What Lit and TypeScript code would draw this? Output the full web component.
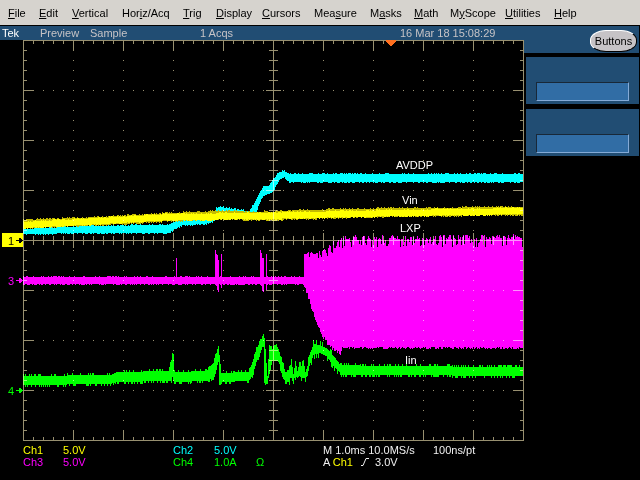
import { LitElement, html, svg, css } from "lit";
import { customElement } from "lit/decorators.js";

type Key = [x: number, top: number, bottom: number];

const W = 524;
const H = 402;

const menus: [string, string, string, number][] = [
  ["", "F", "ile", 31], ["", "E", "dit", 33], ["", "V", "ertical", 50], ["Hor", "i", "z/Acq", 61],
  ["", "T", "rig", 33], ["", "D", "isplay", 46], ["", "C", "ursors", 52], ["Mea", "s", "ure", 56],
  ["M", "a", "sks", 44], ["", "M", "ath", 36], ["M", "y", "Scope", 55], ["", "U", "tilities", 49],
  ["", "H", "elp", 30],
];

/* Repeatable noise, so a trace looks the same on every draw. */
function noise(seed: number) {
  let s = seed;
  return () => {
    s = (s * 1664525 + 1013904223) >>> 0;
    return s / 4294967296;
  };
}

/* Envelope between the keys, one vertical bar for each sample column. */
function envelope(keys: Key[], seed: number, jitter = 2): string {
  const rnd = noise(seed);
  let d = "";
  for (let i = 0; i < keys.length - 1; i++) {
    const [x0, t0, b0] = keys[i];
    const [x1, t1, b1] = keys[i + 1];
    for (let x = x0; x < x1; x++) {
      const f = (x - x0) / (x1 - x0);
      const top = Math.round(t0 + (t1 - t0) * f) - (rnd() < 0.3 ? jitter : 0);
      const bottom = Math.round(b0 + (b1 - b0) * f) + (rnd() < 0.4 ? jitter : 0);
      d += `M${x} ${top}h1V${bottom}h-1z`;
    }
  }
  return d;
}

/* Bars from a list of x, top, bottom. */
const bars = (list: Key[]) => list.map(([x, t, b]) => `M${x} ${t}h1V${b}h-1z`).join("");

const ch2 = envelope([
  [23, 189, 194], [90, 186, 193], [168, 185, 193], [173, 182, 190], [182, 180, 185], [205, 179, 184],
  [212, 175, 182], [216, 168, 178], [221, 167, 177], [238, 170, 178], [249, 171, 177], [254, 163, 176],
  [258, 155, 166], [263, 146, 155], [268, 146, 154], [274, 138, 149], [279, 132, 140], [284, 131, 137],
  [289, 134, 142], [523, 134, 142]], 7, 1);
const ch1 = envelope([
  [23, 180, 188], [100, 177, 185], [170, 173, 181], [220, 171, 179], [263, 172, 180],
  [264, 170, 179], [267, 172, 180], [300, 170, 179], [400, 168, 176], [523, 167, 175]], 23, 1);
const ch1Core = envelope([
  [23, 182, 188], [100, 178, 184], [170, 174, 180], [263, 173, 179], [300, 172, 178],
  [400, 170, 176], [523, 168, 174]], 45, 1);
const ch3 = envelope([[23, 237, 244], [304, 237, 244]], 11, 1) + bars([
  [176, 218, 240], [215, 210, 243], [216, 214, 246], [217, 215, 250], [218, 220, 252], [221, 214, 248],
  [260, 210, 243], [261, 213, 246], [262, 218, 251], [263, 218, 252], [266, 214, 250]]);

/* Switching burst: ragged outline over a solid body. */
function burst(): string {
  const keys: Key[] = [
    [304, 209, 245], [307, 215, 253], [314, 216, 274], [318, 215, 286], [324, 213, 297],
    [332, 208, 307], [340, 203, 312], [342, 202, 307], [400, 202, 307], [523, 201, 307]];
  const rnd = noise(91);
  let d = "";
  for (let i = 0; i < keys.length - 1; i++) {
    const [x0, t0, b0] = keys[i];
    const [x1, t1, b1] = keys[i + 1];
    for (let x = x0; x < x1; x++) {
      const f = (x - x0) / (x1 - x0);
      const spread = x < 307 ? 1 : x < 326 ? 4 : 7;
      const r = rnd();
      const top = t0 + (t1 - t0) * f + (r < 0.3 ? r * 20 : -r * spread);
      const bottom = b0 + (b1 - b0) * f + rnd() * (x < 342 ? 4 : 2);
      d += `M${x} ${Math.round(top)}h1V${Math.round(bottom)}h-1z`;
    }
  }
  return d;
}
const ch3Burst = burst();

const ch4 = envelope([
  [23, 336, 345], [110, 335, 344], [116, 332, 342], [168, 331, 341], [171, 320, 341], [172, 313, 337],
  [173, 314, 341], [174, 332, 342], [206, 331, 341], [213, 323, 338], [218, 306, 322], [219, 315, 343],
  [221, 333, 342], [248, 332, 341], [252, 322, 336], [256, 309, 322], [260, 301, 313], [262, 296, 307],
  [263, 294, 307], [264, 298, 343], [267, 336, 342], [269, 305, 334], [272, 309, 321], [276, 304, 321],
  [278, 309, 320], [282, 322, 337], [285, 332, 342], [289, 332, 342]], 61)
  + envelope([
  [289, 330, 341], [291, 319, 334], [293, 334, 340], [295, 321, 336],
  [297, 331, 338], [299, 322, 336], [301, 330, 337], [303, 320, 338], [305, 332, 338], [307, 326, 336],
  [309, 315, 326], [313, 304, 315], [320, 305, 313], [326, 308, 316], [334, 317, 327], [340, 325, 333]], 77, 4)
  + envelope([[340, 325, 335], [380, 326, 335], [523, 327, 336]], 15);

function graticule(): string {
  let d = "M23 0h501v1h-501zM23 400h501v1h-501zM23 0h1v401h-1zM523 0h1v401h-1zM23 200h501v1h-501zM273 0h1v401h-1z";
  for (let x = 33; x < 523; x += 10) {
    const major = (x - 23) % 50 === 0;
    const n = major ? 10 : 4;
    d += `M${x} 0h1v${n}h-1zM${x} ${401 - n}h1v${n}h-1z`;
    const c = major ? 7 : 4;
    d += `M${x} ${200 - c}h1v${c * 2 + 1}h-1z`;
    for (let y = 50; y < 400; y += 50) if (y !== 200) d += `M${x} ${y}h1v1h-1z`;
  }
  for (let y = 10; y < 400; y += 10) {
    const major = y % 50 === 0;
    const n = major ? 10 : 4;
    d += `M23 ${y}h${n}v1h-${n}zM${524 - n} ${y}h${n}v1h-${n}z`;
    const c = major ? 7 : 4;
    d += `M${273 - c} ${y}h${c * 2 + 1}v1h-${c * 2 + 1}z`;
    for (let x = 73; x < 523; x += 50) if (x !== 273) d += `M${x} ${y}h1v1h-1z`;
  }
  return d;
}
const grid = graticule();

@customElement("scope-plot")
export class ScopePlot extends LitElement {
  static styles = css`
    :host { display: block; }
    svg { display: block; width: 100%; height: auto; shape-rendering: crispEdges; }
    .ch1 { fill: #ffff00; }
    .ch1-edge { fill: #c4bc00; }
    .ch2 { fill: #00ffff; }
    .ch3 { fill: #ff00ff; }
    .ch4 { fill: #00ff00; }
    .grid { fill: #989070; mix-blend-mode: screen; }
    .trigger { fill: #ff7020; }
    .on-ch1 { fill: #000; }
    text { font: 11px "Liberation Sans", Arial, sans-serif; }
    .label { fill: #fff; }
  `;

  render() {
    const arrow = (y: number, cls: string) =>
      svg`<path class=${cls} d="M16 ${y}h3v-2h2v1h1v1h1v1h-1v1h-1v1h-2v-2h-3z"/>`;
    return html`<svg viewBox="0 0 ${W} ${H}" role="img" aria-label="Waveforms">
      <path class="ch2" d=${ch2} />
      <path class="ch1-edge" d=${ch1} />
      <path class="ch1" d=${ch1Core} />
      <path class="ch3" d=${ch3} />
      <path class="ch3" d=${ch3Burst} />
      <path class="ch4" d=${ch4} />
      <path class="grid" d=${grid} />
      <path class="trigger" d="M386 0h10v2h-1v1h-1v1h-1v1h-1v1h-2v-1h-1v-1h-1v-1h-1v-1h-1z" />
      <rect class="ch1" x="2" y="193" width="21" height="14" />
      ${arrow(200, "on-ch1")} ${arrow(240, "ch3")} ${arrow(350, "ch4")}
      <text class="on-ch1" x="8" y="205">1</text>
      <text class="ch3" x="8" y="245">3</text>
      <text class="ch4" x="8" y="355">4</text>
      <text class="label" x="396" y="129">AVDDP</text>
      <text class="label" x="402" y="164">Vin</text>
      <text class="label" x="400" y="192">LXP</text>
      <text class="label" x="405" y="324">Iin</text>
    </svg>`;
  }
}

@customElement("app-root")
export class AppRoot extends LitElement {
  static styles = css`
    :host {
      display: block;
      min-height: 100vh;
      background: #000;
      color: #f0f0f0;
      font: 11px/12px "Liberation Sans", Arial, sans-serif;
    }
    .menu {
      display: flex;
      height: 25px;
      background: #d6d3ce;
      padding-left: 8px;
      margin-bottom: 1px;
    }
    .item {
      flex: none;
      padding: 0;
      border: 0;
      background: none;
      color: #000;
      text-align: left;
      font: 11px/24px "Liberation Sans", Arial, sans-serif;
      white-space: nowrap;
    }
    .body { display: grid; grid-template-columns: minmax(0, 1fr) 116px; }
    .status {
      display: grid;
      grid-template-columns: 38px 50px 110px 200px 1fr;
      height: 14px;
      padding-left: 2px;
      background: #214d73;
      color: #c6c3c6;
      line-height: 14px;
      white-space: nowrap;
    }
    .brand { color: #fff; }
    .head {
      display: flex;
      justify-content: flex-end;
      height: 27px;
      margin-right: 1px;
      padding: 4px 2px 0 0;
      box-sizing: border-box;
      background: #214d73;
    }
    .buttons {
      width: 47px;
      height: 22px;
      padding: 0;
      border: 1px solid #000;
      border-color: #fff #000 #000 #fff;
      border-radius: 16px / 10px;
      background: #c6c3c6;
      color: #000;
      font: 11px/20px "Liberation Sans", Arial, sans-serif;
    }
    .panel {
      height: 47px;
      margin: 4px 1px 5px 2px;
      padding: 25px 10px 3px;
      box-sizing: border-box;
      background: #214d73;
    }
    .field {
      display: block;
      width: 100%;
      height: 19px;
      box-sizing: border-box;
      border: 1px solid;
      border-color: #182838 #84aad6 #84aad6 #182838;
      border-radius: 0;
      background: #316da5;
    }
    .readout {
      display: grid;
      grid-template-columns: 40px 110px 41px 42px 67px 110px 1fr;
      padding: 2px 0 0 23px;
      white-space: nowrap;
    }
    .c1 { color: #ffff00; }
    .c2 { color: #00ffff; }
    .c3 { color: #ff00ff; }
    .c4 { color: #00ff00; }
    .edge { width: 8px; height: 8px; margin: 0 6px 0 8px; fill: none; stroke: currentColor; }
  `;

  render() {
    return html`
      <nav class="menu">
        ${menus.map(([a, key, b, w]) => html`<button class="item" style="width:${w}px">${a}<u>${key}</u>${b}</button>`)}
      </nav>
      <div class="body">
        <main>
          <div class="status">
            <span class="brand">Tek</span><span>Preview</span><span>Sample</span><span>1 Acqs</span>
            <span>16 Mar 18 15:08:29</span>
          </div>
          <scope-plot></scope-plot>
          <div class="readout">
            <span class="c1">Ch1</span><span class="c1">5.0V</span><span class="c2">Ch2</span><span class="c2">5.0V</span>
            <span></span><span>M 1.0ms 10.0MS/s</span><span>100ns/pt</span>
            <span class="c3">Ch3</span><span class="c3">5.0V</span><span class="c4">Ch4</span><span class="c4">1.0A</span>
            <span class="c4">Ω</span>
            <span>A <span class="c1">Ch1</span><svg class="edge" viewBox="0 0 8 8"><path d="M0 7.5h2l3-7h3" /></svg>3.0V</span>
          </div>
        </main>
        <aside>
          <div class="head"><button class="buttons">Buttons</button></div>
          <div class="panel"><input class="field" aria-label="Value 1" /></div>
          <div class="panel"><input class="field" aria-label="Value 2" /></div>
        </aside>
      </div>
    `;
  }
}
